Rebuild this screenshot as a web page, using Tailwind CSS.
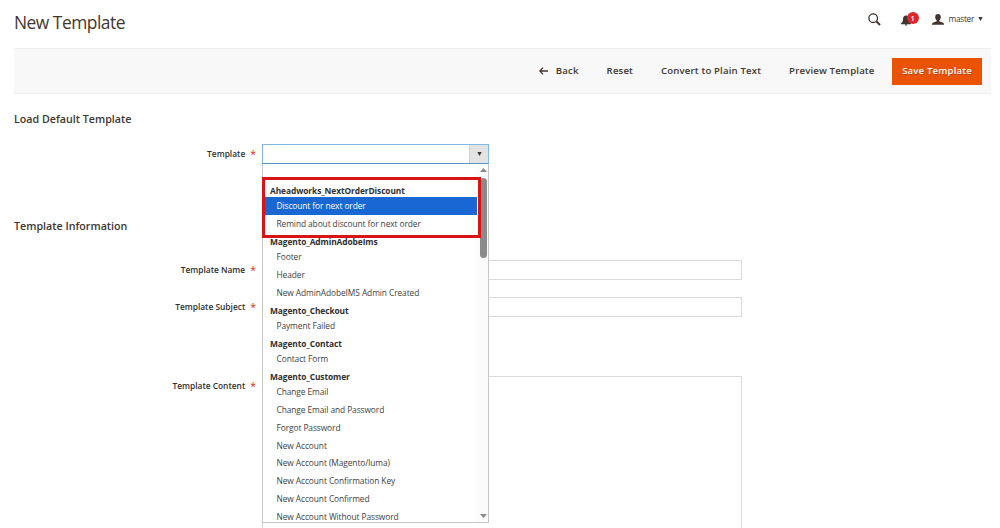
<!DOCTYPE html>
<html lang="en">
<head>
  <meta charset="UTF-8">
  <meta name="viewport" content="width=device-width, initial-scale=1.0">
  <title>New Template</title>
  <script src="https://cdn.jsdelivr.net/npm/@tailwindcss/browser@4"></script>
</head>
<body class="bg-white font-['Open_Sans',sans-serif] text-[#41362f] h-[528px] overflow-hidden">
  <!-- Page header -->
  <header class="flex items-center h-[48px] pl-[14px] pr-[17px] pb-[5px]">
    <h1 class="text-[17.4px] leading-[24px] tracking-[-0.5px] flex-1">New Template</h1>
    <button class="mr-[20px] mt-[-4px]">
      <svg class="w-[13px] h-[13px]" viewBox="0 0 13 13" fill="none" stroke="#41362f">
        <circle cx="5.2" cy="5.2" r="4.3" stroke-width="1.3"/>
        <path d="M8.4 8.400L12 12" stroke-width="2"/>
      </svg>
    </button>
    <button class="relative w-[18px] h-[16px] mr-[13px] mt-[-4px]">
      <svg class="absolute left-0 top-[3px] w-[10px] h-[11px]" viewBox="0 0 10 11" fill="#41362f">
        <path d="M5 .5C3 .5 2 2 2 4c0 2.300-.7 3.300-2 4.500v.7h10v-.7C8.700 7.300 8 6.300 8 4 8 2 7 .5 5 .5zM3.700 9.600a1.300 1.100 0 0 0 2.600 0z"/>
      </svg>
      <span class="absolute right-0 top-0 size-[12px] rounded-full bg-[#e22626] text-white text-[7.5px] leading-[12px] font-semibold text-center">1</span>
    </button>
    <button class="flex items-center mt-[-5px]">
      <svg class="w-[12px] h-[11px]" viewBox="0 0 12 11" fill="#41362f">
        <path d="M6 0C4.200 0 3.200 1.200 3.200 3c0 1.500.6 2.700 1.500 3.400v.9L.8 8.700C.3 8.900 0 9.500 0 10.800h12c0-1.300-.3-1.900-.8-2.100L7.300 7.300v-.9C8.200 5.700 8.800 4.500 8.800 3 8.800 1.200 7.800 0 6 0z"/>
      </svg>
      <span class="ml-[5px] text-[8.4px] leading-[12px] tracking-[-0.35px]">master</span>
      <svg class="ml-[4px] w-[5px] h-[4px]" viewBox="0 0 5 4" fill="#41362f"><path d="M.3 0h4.400L2.500 4z"/></svg>
    </button>
  </header>

  <!-- Actions bar -->
  <div class="ml-[14px] mr-[9px] h-[46px] bg-[#f8f8f8] border-y border-[#efefef] flex items-center justify-end pr-[9px] text-[9.6px] font-semibold tracking-[0.16px]">
    <button class="flex items-center mr-[28px]">
      <svg class="w-[9px] h-[8px] mr-[8px]" viewBox="0 0 9 8" fill="none" stroke="#41362f" stroke-width="1.300"><path d="M4 .6L.9 4 4 7.400M1 4h8"/></svg>
      Back
    </button>
    <button class="mr-[28px]">Reset</button>
    <button class="mr-[28px]">Convert to Plain Text</button>
    <button class="mr-[17.5px]">Preview Template</button>
    <button class="w-[90px] h-[27px] bg-[#eb5202] text-white [text-shadow:0.6px_0.6px_0_rgba(0,0,0,0.25)]">Save Template</button>
  </div>

  <!-- Load default template -->
  <section class="h-[108px] pt-[17px]">
    <h2 class="ml-[14px] text-[10.7px] leading-[16px] font-semibold">Load Default Template</h2>
    <div class="flex mt-[17px]">
      <label class="flex justify-end w-[257px] pr-[1px] text-[8.4px] leading-[20px] font-semibold text-[#303030]">Template <span class="ml-[5px] text-[10.5px] leading-[20px] font-normal text-[#e22626]">*</span></label>
      <div class="relative ml-[5px] w-[227px]">
        <div class="flex h-[20px] border border-[#7fb9e4] border-b-[#5b95c4] bg-white">
          <span class="flex-1"></span>
          <span class="w-[19px] bg-[#e3e3e3] border-l border-[#d0d0d0] flex items-center justify-center">
            <svg class="w-[5px] h-[4px]" viewBox="0 0 5 4" fill="#41362f"><path d="M.3 0h4.400L2.500 4z"/></svg>
          </span>
        </div>

        <!-- Opened option list -->
        <div class="absolute z-10 left-0 top-[20px] w-[227px] h-[359px] bg-white border border-t-0 border-[#c6c6c6] flex overflow-hidden">
          <ul class="flex-1 text-[8.4px] leading-[17.93px] tracking-[-0.09px] whitespace-nowrap text-[#414141] [&>li]:h-[17.93px] [&>li]:pl-[13.5px] [&>h3]:h-[15.08px] [&>h3]:pl-[7px] [&>h3]:leading-[17px] [&>h3]:font-bold [&>h3]:text-[#303030]">
            <li></li>
            <h3>Aheadworks_NextOrderDiscount</h3>
            <li class="bg-[#1967d2] text-white">Discount for next order</li>
            <li>Remind about discount for next order</li>
            <h3>Magento_AdminAdobeIms</h3>
            <li>Footer</li>
            <li>Header</li>
            <li>New AdminAdobeIMS Admin Created</li>
            <h3>Magento_Checkout</h3>
            <li>Payment Failed</li>
            <h3>Magento_Contact</h3>
            <li>Contact Form</li>
            <h3>Magento_Customer</h3>
            <li>Change Email</li>
            <li>Change Email and Password</li>
            <li>Forgot Password</li>
            <li>New Account</li>
            <li>New Account (Magento/luma)</li>
            <li>New Account Confirmation Key</li>
            <li>New Account Confirmed</li>
            <li>New Account Without Password</li>
          </ul>
          <div class="w-[11px] pl-[2px] bg-[#fbfbfb] flex flex-col items-center pt-[4px] pb-[4px]">
            <svg class="w-[7px] h-[4px]" viewBox="0 0 7 4" fill="#8b8b8b"><path d="M0 4h7L3.500 0z"/></svg>
            <span class="mt-[6px] w-[7px] h-[80px] rounded-full bg-[#8b8b8b]"></span>
            <svg class="mt-auto w-[7px] h-[4px]" viewBox="0 0 7 4" fill="#8b8b8b"><path d="M0 0h7L3.500 4z"/></svg>
          </div>
        </div>
        <!-- Highlight frame -->
        <div class="absolute z-20 left-0 top-[33px] w-[219px] h-[61px] border-[3px] border-[#d91414]"></div>
      </div>
    </div>
  </section>

  <!-- Template information -->
  <section class="pt-[16px]">
    <h2 class="ml-[14px] text-[10.7px] leading-[16px] font-semibold">Template Information</h2>
    <div class="flex flex-col mt-[26px] text-[8.4px] leading-[20px] font-semibold text-[#303030]">
      <div class="flex h-[37px]">
        <label class="flex justify-end w-[257px] pr-[1px]">Template Name <span class="ml-[5px] text-[10.5px] leading-[20px] font-normal text-[#e22626]">*</span></label>
        <div class="ml-[5px] w-[480px] h-[20px] border border-[#dadada]"></div>
      </div>
      <div class="flex h-[79px]">
        <label class="flex justify-end w-[257px] pr-[1px]">Template Subject <span class="ml-[5px] text-[10.5px] leading-[20px] font-normal text-[#e22626]">*</span></label>
        <div class="ml-[5px] w-[480px] h-[20px] border border-[#dadada]"></div>
      </div>
      <div class="flex">
        <label class="flex justify-end w-[257px] pr-[1px]">Template Content <span class="ml-[5px] text-[10.5px] leading-[20px] font-normal text-[#e22626]">*</span></label>
        <div class="ml-[5px] w-[480px] h-[153px] border border-b-0 border-[#dadada]"></div>
      </div>
    </div>
  </section>
</body>
</html>
